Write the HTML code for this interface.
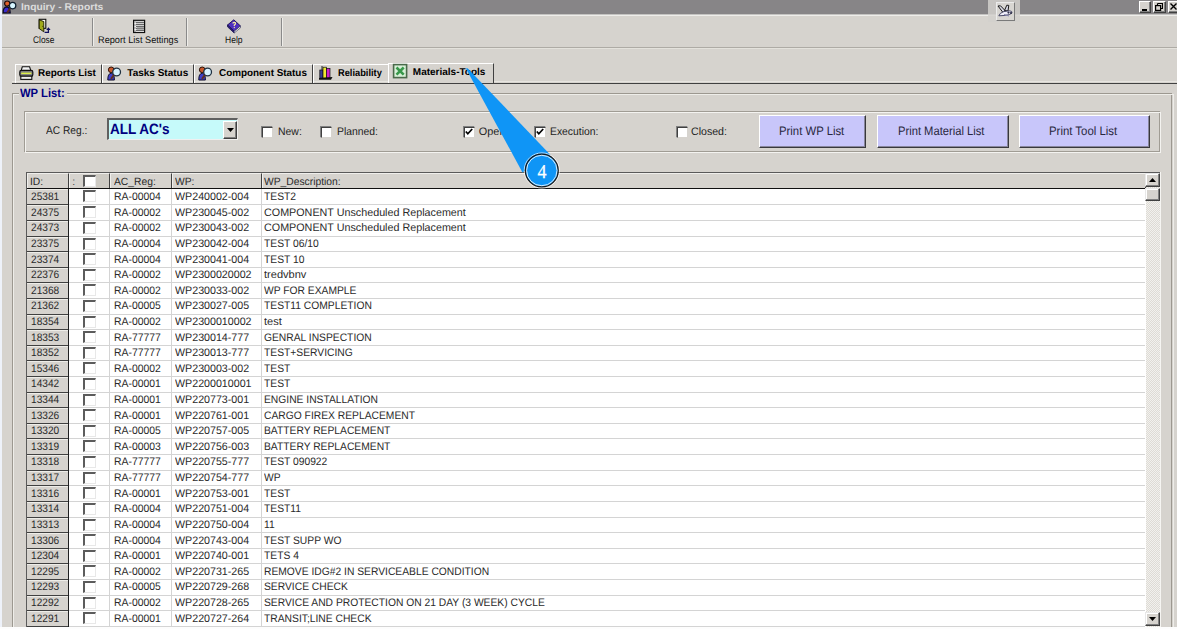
<!DOCTYPE html>
<html><head><meta charset="utf-8"><style>
*{margin:0;padding:0;box-sizing:border-box}
html,body{width:1177px;height:629px;overflow:hidden;background:#d6d3ce;font-family:"Liberation Sans",sans-serif;color:#000}
.a{position:absolute}
.t{position:absolute;white-space:pre;line-height:1;text-rendering:geometricPrecision}
.cb{position:absolute;width:13px;height:12px;border-top:2px solid #5c5c5c;border-left:2px solid #5c5c5c;border-right:1px solid #e8e8e8;border-bottom:1px solid #e8e8e8;background:#fff}
.fcb{position:absolute;width:12px;height:12px;border-top:1px solid #808080;border-left:1px solid #808080;border-right:1px solid #fff;border-bottom:1px solid #fff;background:#fff}
.fcb:after{content:"";position:absolute;left:0;top:0;width:9px;height:9px;border-top:1px solid #404040;border-left:1px solid #404040;border-right:1px solid #d6d3ce;border-bottom:1px solid #d6d3ce}
.btn{position:absolute;background:#c8c6fa;border-top:1px solid #fff;border-left:1px solid #fff;border-right:1px solid #38383c;border-bottom:1px solid #38383c;box-shadow:inset -1px -1px 0 #88869c}
.hd{position:absolute;top:173px;height:15px;background:#d6d3ce;border-top:1px solid #f0efec;border-left:1px solid #f0efec;border-right:1px solid #404040}
.tb{position:absolute;border-top:1px solid #fff;border-left:1px solid #fff;border-right:1px solid #404040;height:19px;top:64px}
</style></head><body>
<div class="a" style="left:0;top:0;width:2px;height:629px;background:#eef2fa"></div>
<div class="a" style="left:2px;top:0;width:1175px;height:14px;background:#878587"></div>
<div class="t" style="left:20.60px;top:3.00px;font-size:9.8px;font-weight:700;color:#dcdcdc;transform:scaleX(1.0506);transform-origin:0 0;">Inquiry - Reports</div>
<svg class="a" style="left:2px;top:0" width="15" height="14" viewBox="0 0 15 14">
<path d="M1.2,12.8 Q0.8,7.2 4.8,6.8 Q8,7 8.2,12.8 Z" fill="#3a2ad0" stroke="#0a0a20" stroke-width="1.2"/>
<circle cx="5.2" cy="3.6" r="2.6" fill="#e0602a" stroke="#1a0a0a" stroke-width="1.2"/>
<circle cx="10.6" cy="5.6" r="3.2" fill="#d8f6ff" stroke="#102030" stroke-width="1.3"/>
<path d="M8,8.4 L5.2,12.4" stroke="#602a1a" stroke-width="1.8"/>
</svg>
<div class="a" style="left:1138.5px;top:1px;width:12.5px;height:11.5px;background:#d6d3ce;border-top:1px solid #fff;border-left:1px solid #fff;border-right:1px solid #404040;border-bottom:1px solid #404040;box-shadow:inset -1px -1px 0 #808080"></div>
<div class="a" style="left:1142px;top:8.5px;width:5px;height:2px;background:#000"></div>
<div class="a" style="left:1152.5px;top:1px;width:13px;height:11.5px;background:#d6d3ce;border-top:1px solid #fff;border-left:1px solid #fff;border-right:1px solid #404040;border-bottom:1px solid #404040;box-shadow:inset -1px -1px 0 #808080"></div>
<svg class="a" style="left:1155px;top:2.5px" width="8" height="8" viewBox="0 0 8 8"><path d="M2.5,0.5 H7.5 V5.5 H6 M2.5,0.5 V2" fill="none" stroke="#000" stroke-width="1.2"/><rect x="0.6" y="2.6" width="5" height="4.8" fill="none" stroke="#000" stroke-width="1.2"/></svg>
<div class="a" style="left:1167.5px;top:1px;width:12px;height:11.5px;background:#d6d3ce;border-top:1px solid #fff;border-left:1px solid #fff;border-right:1px solid #404040;border-bottom:1px solid #404040;box-shadow:inset -1px -1px 0 #808080"></div>
<svg class="a" style="left:1170px;top:3px" width="7" height="7" viewBox="0 0 7 7"><path d="M0.5,0.5 L6.5,6.5 M6.5,0.5 L0.5,6.5" stroke="#000" stroke-width="1.4"/></svg>
<div class="a" style="left:2px;top:14px;width:1175px;height:1px;background:#c4c3c1"></div>
<div class="a" style="left:2px;top:15px;width:1175px;height:1px;background:#eeedea"></div>
<div class="a" style="left:2px;top:46.6px;width:1175px;height:1.8px;background:#aeaba5"></div>
<div class="a" style="left:2px;top:48.2px;width:1175px;height:1px;background:#e4e2dc"></div>
<div class="a" style="left:91.5px;top:17.5px;width:1px;height:28px;background:#8a8a8a"></div>
<div class="a" style="left:92.5px;top:17.5px;width:1px;height:28px;background:#eeede9"></div>
<div class="a" style="left:186.3px;top:17.5px;width:1px;height:28px;background:#8a8a8a"></div>
<div class="a" style="left:187.3px;top:17.5px;width:1px;height:28px;background:#eeede9"></div>
<div class="a" style="left:281px;top:17.5px;width:1px;height:28px;background:#8a8a8a"></div>
<div class="a" style="left:282px;top:17.5px;width:1px;height:28px;background:#eeede9"></div>
<div class="a" style="left:987.6px;top:0;width:32.7px;height:22px;background:#d2d0cc;opacity:0.85"></div>
<div class="a" style="left:995.7px;top:2px;width:19.5px;height:18.5px;background:#d8d6d2;border-top:1px solid #ececec;border-left:1px solid #ececec;border-right:1.5px solid #7a7a7a;border-bottom:1.5px solid #7a7a7a"></div>
<svg class="a" style="left:995px;top:2px" width="20" height="18" viewBox="995 2 20 18">
<path d="M998,6 L1000.5,5.8 L1006,11.5 L1003,12.5 Z" fill="#d8d8e4" stroke="#181818" stroke-width="1"/>
<path d="M1004.5,10.5 L1006.8,5.2 L1008.8,5.4 L1008,11 Z" fill="#d8d8e4" stroke="#181818" stroke-width="1"/>
<path d="M998.8,15.8 Q999.5,13 1004,11.5 L1009.5,10.8 Q1012.5,11 1012,13 Q1010.5,15 1004,15.5 Z" fill="#eeeef8" stroke="#3a3a5a" stroke-width="0.9"/>
<circle cx="1008.5" cy="12.6" r="1.1" fill="#30304a"/><circle cx="1011" cy="13" r="1.1" fill="#30304a"/>
<path d="M1004,14.5 L1009,16" stroke="#8080a8" stroke-width="1"/>
</svg>
<div class="t" style="left:33.20px;top:36.00px;font-size:9.6px;font-weight:400;color:#111;transform:scaleX(0.8720);transform-origin:0 0;">Close</div>
<div class="t" style="left:98.00px;top:36.00px;font-size:9.6px;font-weight:400;color:#111;transform:scaleX(0.9583);transform-origin:0 0;">Report List Settings</div>
<div class="t" style="left:224.60px;top:36.00px;font-size:9.6px;font-weight:400;color:#111;transform:scaleX(0.8900);transform-origin:0 0;">Help</div>
<svg class="a" style="left:0;top:0" width="260" height="40" viewBox="0 0 260 40">
<rect x="39.2" y="19.3" width="6.6" height="9" fill="#fffff4" stroke="#101010" stroke-width="1.1"/>
<path d="M39.2,19.8 L43.8,21.6 L43.8,31.8 L39.2,28.6 Z" fill="#a0aa1c" stroke="#1a1a00" stroke-width="0.9"/>
<circle cx="42.8" cy="26.2" r="0.5" fill="#202000"/>
<path d="M44.6,32.3 H48.4 V29" fill="none" stroke="#101060" stroke-width="1.3"/>
<path d="M46.2,30 L48.4,27.3 L50.6,30 Z" fill="#101060"/>
<rect x="133.6" y="20.3" width="11" height="12.2" fill="#f4f4f4" stroke="#101010" stroke-width="1.2"/>
<path d="M136,22.3 H144 M136,24.3 H144 M136,26.3 H144 M136,28.3 H144 M136,30.3 H144" stroke="#303030" stroke-width="0.9"/>
<rect x="137" y="26.8" width="7" height="3" fill="#909090" opacity="0.6"/>
<path d="M134.5,22 H135.5 M134.5,25 H135.5 M134.5,28 H135.5 M134.5,31 H135.5" stroke="#202020" stroke-width="0.9"/>
<path d="M227.5,25 L233.8,19.8 L240.5,26 L234.2,31.3 Z" fill="#4f30c0" stroke="#1a1050" stroke-width="0.9"/>
<path d="M227.5,25 L227.5,26.8 L234.2,33 L234.2,31.3 Z" fill="#2a1a80" stroke="#1a1050" stroke-width="0.8"/>
<path d="M234.2,31.3 L240.5,26 L240.5,27.8 L234.2,33 Z" fill="#f0f0f8" stroke="#404060" stroke-width="0.7"/>
<path d="M232.6,23.3 Q234,21.6 235.4,22.8 Q236,24.2 234.4,25 L234.2,26.2" fill="none" stroke="#f8f0a0" stroke-width="1.2"/>
<circle cx="234.3" cy="27.6" r="0.7" fill="#f8f0a0"/>
</svg>
<div class="a" style="left:12px;top:81px;width:1165px;height:1px;background:#e6e4df"></div>
<div class="a" style="left:12px;top:82.5px;width:1165px;height:1.2px;background:#404040"></div>
<div class="tb" style="left:14.5px;width:87.5px;"></div>
<div class="t" style="left:38.20px;top:69.00px;font-size:10.0px;font-weight:700;color:#000;transform:scaleX(0.9915);transform-origin:0 0;">Reports List</div>
<div class="tb" style="left:102px;width:92px;"></div>
<div class="t" style="left:127.30px;top:69.00px;font-size:10.0px;font-weight:700;color:#000;">Tasks Status</div>
<div class="tb" style="left:194px;width:119px;"></div>
<div class="t" style="left:219.00px;top:69.00px;font-size:10.0px;font-weight:700;color:#000;transform:scaleX(0.9888);transform-origin:0 0;">Component Status</div>
<div class="tb" style="left:313px;width:74.5px;border-right:none;"></div>
<div class="t" style="left:337.80px;top:69.00px;font-size:10.0px;font-weight:700;color:#000;transform:scaleX(0.9271);transform-origin:0 0;">Reliability</div>
<div class="a" style="left:387.5px;top:62.5px;width:106px;height:20px;background:#d6d3ce;border-top:1px solid #fff;border-left:1px solid #fff;border-right:1px solid #404040"></div>
<div class="t" style="left:412.80px;top:67.50px;font-size:10.0px;font-weight:700;color:#000;">Materials-Tools</div>
<svg class="a" style="left:0;top:0" width="40" height="84" viewBox="0 0 40 84">
<path d="M22.3,66.8 H29.6 L30.8,70.5 H21.2 Z" fill="#f4f4f4" stroke="#101010" stroke-width="1.1"/>
<rect x="19.8" y="70.3" width="13" height="6" rx="1.6" fill="#7c7c80" stroke="#101010" stroke-width="1.2"/>
<rect x="21.2" y="72.6" width="10.2" height="1.5" fill="#dcf048"/>
<rect x="20.8" y="76.2" width="11" height="3.2" fill="#eeeeee" stroke="#101010" stroke-width="1.1"/>
</svg>
<svg class="a" style="left:107px;top:65.5px" width="15" height="15" viewBox="0 0 15 15">
<path d="M0.8,14 Q0.6,7.6 4.2,7.2 Q7.4,7.4 7.4,14 Z" fill="#4040c8" stroke="#101030" stroke-width="1"/>
<circle cx="4.2" cy="3.8" r="2.8" fill="#c8582a" stroke="#2a1008" stroke-width="1"/>
<circle cx="9.6" cy="6" r="3.9" fill="#d8f4ff" stroke="#203040" stroke-width="1.3"/>
<path d="M6.8,9 L4,13" stroke="#603020" stroke-width="1.9"/>
</svg>
<svg class="a" style="left:198px;top:65.5px" width="15" height="15" viewBox="0 0 15 15">
<path d="M0.8,14 Q0.6,7.6 4.2,7.2 Q7.4,7.4 7.4,14 Z" fill="#4040c8" stroke="#101030" stroke-width="1"/>
<circle cx="4.2" cy="3.8" r="2.8" fill="#c8582a" stroke="#2a1008" stroke-width="1"/>
<circle cx="9.6" cy="6" r="3.9" fill="#d8f4ff" stroke="#203040" stroke-width="1.3"/>
<path d="M6.8,9 L4,13" stroke="#603020" stroke-width="1.9"/>
</svg>
<svg class="a" style="left:0;top:0" width="420" height="90" viewBox="0 0 420 90">
<rect x="319.8" y="70" width="3.2" height="8.2" fill="#3a3a90" stroke="#101010" stroke-width="0.7"/>
<rect x="323" y="67.2" width="3.4" height="11" fill="#f0e830" stroke="#101010" stroke-width="0.7"/>
<rect x="326.4" y="68.4" width="3.6" height="9.8" fill="#d020c8" stroke="#101010" stroke-width="0.7"/>
<path d="M322,66 V70" stroke="#101010" stroke-width="0.9"/>
<path d="M319,78 L332.5,77 L331,79.8 L319,79.8 Z" fill="#101010"/>
<rect x="393.6" y="64.6" width="13" height="13" fill="#d8f0d8" stroke="#4a6a4a" stroke-width="1.6"/>
<path d="M396.5,67.5 L403.7,74.7 M403.7,67.5 L396.5,74.7" stroke="#38984a" stroke-width="2.6"/>
</svg>
<div class="a" style="left:12px;top:93px;width:1160px;height:600px;border-top:1px solid #9c9890;border-left:1px solid #9c9890;border-right:1px solid #9c9890"></div>
<div class="a" style="left:13px;top:94px;width:1160.5px;height:600px;border-top:1px solid #eeede9;border-left:1px solid #eeede9;border-right:1px solid #eeede9"></div>
<div class="a" style="left:19px;top:86px;width:48px;height:12px;background:#d6d3ce"></div>
<div class="t" style="left:20.20px;top:87.00px;font-size:12.0px;font-weight:700;color:#000080;transform:scaleX(0.9362);transform-origin:0 0;">WP List:</div>
<div class="a" style="left:24px;top:111px;width:1136px;height:41px;border:1px solid #a09c94"></div>
<div class="a" style="left:25px;top:112px;width:1136px;height:41px;border:1px solid #f4f3f0"></div>
<div class="t" style="left:46.30px;top:126.00px;font-size:11.2px;font-weight:400;color:#222;transform:scaleX(0.9111);transform-origin:0 0;">AC Reg.:</div>
<div class="a" style="left:107px;top:118px;width:130.5px;height:22px;background:#c6fafa;border-top:2px solid #606060;border-left:2px solid #606060;border-right:1px solid #f0f0f0;border-bottom:1px solid #f0f0f0"></div>
<div class="t" style="left:110.20px;top:122.00px;font-size:15.0px;font-weight:700;color:#000080;transform:scaleX(0.9015);transform-origin:0 0;">ALL AC's</div>
<div class="a" style="left:223px;top:120.5px;width:13.5px;height:18.5px;background:#d6d3ce;border-top:1px solid #fff;border-left:1px solid #fff;border-right:1px solid #404040;border-bottom:1px solid #404040;box-shadow:inset -1px -1px 0 #808080"></div>
<svg class="a" style="left:226.5px;top:127.5px" width="7" height="4" viewBox="0 0 7 4"><path d="M0,0 H7 L3.5,4 Z" fill="#000"/></svg>
<div class="fcb" style="left:261.3px;top:126.3px"></div>
<div class="t" style="left:277.60px;top:127.00px;font-size:10.9px;font-weight:400;color:#222;transform:scaleX(0.9583);transform-origin:0 0;">New:</div>
<div class="fcb" style="left:320.4px;top:126.3px"></div>
<div class="t" style="left:336.80px;top:127.00px;font-size:10.9px;font-weight:400;color:#222;transform:scaleX(0.9535);transform-origin:0 0;">Planned:</div>
<div class="fcb" style="left:462.8px;top:126.3px"></div>
<svg class="a" style="left:464.8px;top:128.3px" width="8" height="8" viewBox="0 0 8 8"><path d="M0.8,3.5 L2.8,5.8 L7.2,1" fill="none" stroke="#000" stroke-width="1.7"/></svg>
<div class="t" style="left:478.80px;top:127.00px;font-size:10.9px;font-weight:400;color:#222;">Open:</div>
<div class="fcb" style="left:534px;top:126.3px"></div>
<svg class="a" style="left:536px;top:128.3px" width="8" height="8" viewBox="0 0 8 8"><path d="M0.8,3.5 L2.8,5.8 L7.2,1" fill="none" stroke="#000" stroke-width="1.7"/></svg>
<div class="t" style="left:549.70px;top:127.00px;font-size:10.9px;font-weight:400;color:#222;transform:scaleX(0.9500);transform-origin:0 0;">Execution:</div>
<div class="fcb" style="left:675.8px;top:126.3px"></div>
<div class="t" style="left:691.20px;top:127.00px;font-size:10.9px;font-weight:400;color:#222;transform:scaleX(0.9730);transform-origin:0 0;">Closed:</div>
<div class="btn" style="left:759px;top:114.5px;width:107px;height:33px"></div>
<div class="btn" style="left:877px;top:114.5px;width:131.5px;height:33px"></div>
<div class="btn" style="left:1019px;top:114.5px;width:131px;height:33px"></div>
<div class="t" style="left:779.00px;top:125.00px;font-size:12.2px;font-weight:400;color:#282840;transform:scaleX(0.9296);transform-origin:0 0;">Print WP List</div>
<div class="t" style="left:898.40px;top:125.00px;font-size:12.2px;font-weight:400;color:#282840;transform:scaleX(0.9179);transform-origin:0 0;">Print Material List</div>
<div class="t" style="left:1049.40px;top:125.00px;font-size:12.2px;font-weight:400;color:#282840;transform:scaleX(0.9342);transform-origin:0 0;">Print Tool List</div>
<div class="a" style="left:26px;top:172px;width:1134px;height:470px;background:#fff;border:1px solid #5a5a5a;border-bottom:none"></div>
<div class="a" style="left:27px;top:173px;width:1118px;height:15.5px;background:#d6d3ce"></div>
<div class="hd" style="left:27px;width:42px"></div>
<div class="t" style="left:30.30px;top:177.00px;font-size:10.5px;font-weight:400;color:#2a2a2a;transform:scaleX(0.9800);transform-origin:0 0;">ID:</div>
<div class="hd" style="left:69px;width:41px"></div>
<div class="hd" style="left:110px;width:62px"></div>
<div class="t" style="left:114.20px;top:177.00px;font-size:10.5px;font-weight:400;color:#2a2a2a;transform:scaleX(0.9800);transform-origin:0 0;">AC_Reg:</div>
<div class="hd" style="left:172px;width:90px"></div>
<div class="t" style="left:175.20px;top:177.00px;font-size:10.5px;font-weight:400;color:#2a2a2a;transform:scaleX(0.9800);transform-origin:0 0;">WP:</div>
<div class="hd" style="left:262px;width:884px"></div>
<div class="t" style="left:264.40px;top:177.00px;font-size:10.5px;font-weight:400;color:#2a2a2a;transform:scaleX(0.9800);transform-origin:0 0;">WP_Description:</div>
<div class="t" style="left:72.30px;top:177.00px;font-size:10.5px;font-weight:400;color:#444;">:</div>
<div class="cb" style="left:83px;top:174.8px"></div>
<div class="a" style="left:96px;top:174px;width:13px;height:14px;background:#cdcac3"></div>
<div class="a" style="left:27px;top:188px;width:1118px;height:1.2px;background:#101010"></div>
<div class="a" style="left:27px;top:189px;width:41.3px;height:440px;background:#d6d3ce"></div>
<div class="a" style="left:68px;top:189px;width:1px;height:450px;background:#202020"></div>
<div class="a" style="left:109px;top:189px;width:1px;height:450px;background:#d4d4d4"></div>
<div class="a" style="left:171px;top:189px;width:1px;height:450px;background:#d4d4d4"></div>
<div class="a" style="left:261px;top:189px;width:1px;height:450px;background:#d4d4d4"></div>
<div class="a" style="left:27px;top:189.40px;width:41.3px;height:1px;background:#eeede8"></div>
<div class="a" style="left:27px;top:204.30px;width:41.3px;height:1px;background:#404040"></div>
<div class="a" style="left:69.3px;top:204.30px;width:1075.7px;height:1px;background:#d4d4d4"></div>
<div class="t" style="left:30.80px;top:192.00px;font-size:10.9px;font-weight:400;color:#2a2a2a;transform:scaleX(0.9300);transform-origin:0 0;">25381</div>
<div class="cb" style="left:83px;top:190.40px"></div>
<div class="t" style="left:114.00px;top:192.00px;font-size:10.9px;font-weight:400;color:#2a2a2a;transform:scaleX(0.9550);transform-origin:0 0;">RA-00004</div>
<div class="t" style="left:174.50px;top:192.00px;font-size:10.9px;font-weight:400;color:#2a2a2a;transform:scaleX(0.9800);transform-origin:0 0;">WP240002-004</div>
<div class="t" style="left:264.40px;top:192.00px;font-size:10.9px;font-weight:400;color:#2a2a2a;transform:scaleX(0.9450);transform-origin:0 0;">TEST2</div>
<div class="a" style="left:27px;top:205.30px;width:41.3px;height:1px;background:#eeede8"></div>
<div class="a" style="left:27px;top:219.91px;width:41.3px;height:1px;background:#404040"></div>
<div class="a" style="left:69.3px;top:219.91px;width:1075.7px;height:1px;background:#d4d4d4"></div>
<div class="t" style="left:30.80px;top:208.00px;font-size:10.9px;font-weight:400;color:#2a2a2a;transform:scaleX(0.9300);transform-origin:0 0;">24375</div>
<div class="cb" style="left:83px;top:206.30px"></div>
<div class="t" style="left:114.00px;top:208.00px;font-size:10.9px;font-weight:400;color:#2a2a2a;transform:scaleX(0.9550);transform-origin:0 0;">RA-00002</div>
<div class="t" style="left:174.50px;top:208.00px;font-size:10.9px;font-weight:400;color:#2a2a2a;transform:scaleX(0.9800);transform-origin:0 0;">WP230045-002</div>
<div class="t" style="left:264.40px;top:208.00px;font-size:10.9px;font-weight:400;color:#2a2a2a;transform:scaleX(0.9874);transform-origin:0 0;">COMPONENT Unscheduled Replacement</div>
<div class="a" style="left:27px;top:220.91px;width:41.3px;height:1px;background:#eeede8"></div>
<div class="a" style="left:27px;top:235.52px;width:41.3px;height:1px;background:#404040"></div>
<div class="a" style="left:69.3px;top:235.52px;width:1075.7px;height:1px;background:#d4d4d4"></div>
<div class="t" style="left:30.80px;top:223.00px;font-size:10.9px;font-weight:400;color:#2a2a2a;transform:scaleX(0.9300);transform-origin:0 0;">24373</div>
<div class="cb" style="left:83px;top:221.91px"></div>
<div class="t" style="left:114.00px;top:223.00px;font-size:10.9px;font-weight:400;color:#2a2a2a;transform:scaleX(0.9550);transform-origin:0 0;">RA-00002</div>
<div class="t" style="left:174.50px;top:223.00px;font-size:10.9px;font-weight:400;color:#2a2a2a;transform:scaleX(0.9800);transform-origin:0 0;">WP230043-002</div>
<div class="t" style="left:264.40px;top:223.00px;font-size:10.9px;font-weight:400;color:#2a2a2a;transform:scaleX(0.9874);transform-origin:0 0;">COMPONENT Unscheduled Replacement</div>
<div class="a" style="left:27px;top:236.52px;width:41.3px;height:1px;background:#eeede8"></div>
<div class="a" style="left:27px;top:251.13px;width:41.3px;height:1px;background:#404040"></div>
<div class="a" style="left:69.3px;top:251.13px;width:1075.7px;height:1px;background:#d4d4d4"></div>
<div class="t" style="left:30.80px;top:239.00px;font-size:10.9px;font-weight:400;color:#2a2a2a;transform:scaleX(0.9300);transform-origin:0 0;">23375</div>
<div class="cb" style="left:83px;top:237.52px"></div>
<div class="t" style="left:114.00px;top:239.00px;font-size:10.9px;font-weight:400;color:#2a2a2a;transform:scaleX(0.9550);transform-origin:0 0;">RA-00004</div>
<div class="t" style="left:174.50px;top:239.00px;font-size:10.9px;font-weight:400;color:#2a2a2a;transform:scaleX(0.9800);transform-origin:0 0;">WP230042-004</div>
<div class="t" style="left:264.40px;top:239.00px;font-size:10.9px;font-weight:400;color:#2a2a2a;transform:scaleX(0.9450);transform-origin:0 0;">TEST 06/10</div>
<div class="a" style="left:27px;top:252.13px;width:41.3px;height:1px;background:#eeede8"></div>
<div class="a" style="left:27px;top:266.74px;width:41.3px;height:1px;background:#404040"></div>
<div class="a" style="left:69.3px;top:266.74px;width:1075.7px;height:1px;background:#d4d4d4"></div>
<div class="t" style="left:30.80px;top:255.00px;font-size:10.9px;font-weight:400;color:#2a2a2a;transform:scaleX(0.9300);transform-origin:0 0;">23374</div>
<div class="cb" style="left:83px;top:253.13px"></div>
<div class="t" style="left:114.00px;top:255.00px;font-size:10.9px;font-weight:400;color:#2a2a2a;transform:scaleX(0.9550);transform-origin:0 0;">RA-00004</div>
<div class="t" style="left:174.50px;top:255.00px;font-size:10.9px;font-weight:400;color:#2a2a2a;transform:scaleX(0.9800);transform-origin:0 0;">WP230041-004</div>
<div class="t" style="left:264.40px;top:255.00px;font-size:10.9px;font-weight:400;color:#2a2a2a;transform:scaleX(0.9450);transform-origin:0 0;">TEST 10</div>
<div class="a" style="left:27px;top:267.74px;width:41.3px;height:1px;background:#eeede8"></div>
<div class="a" style="left:27px;top:282.35px;width:41.3px;height:1px;background:#404040"></div>
<div class="a" style="left:69.3px;top:282.35px;width:1075.7px;height:1px;background:#d4d4d4"></div>
<div class="t" style="left:30.80px;top:270.00px;font-size:10.9px;font-weight:400;color:#2a2a2a;transform:scaleX(0.9300);transform-origin:0 0;">22376</div>
<div class="cb" style="left:83px;top:268.74px"></div>
<div class="t" style="left:114.00px;top:270.00px;font-size:10.9px;font-weight:400;color:#2a2a2a;transform:scaleX(0.9550);transform-origin:0 0;">RA-00002</div>
<div class="t" style="left:174.50px;top:270.00px;font-size:10.9px;font-weight:400;color:#2a2a2a;transform:scaleX(0.9800);transform-origin:0 0;">WP2300020002</div>
<div class="t" style="left:264.40px;top:270.00px;font-size:10.9px;font-weight:400;color:#2a2a2a;transform:scaleX(1.0150);transform-origin:0 0;">tredvbnv</div>
<div class="a" style="left:27px;top:283.35px;width:41.3px;height:1px;background:#eeede8"></div>
<div class="a" style="left:27px;top:297.96px;width:41.3px;height:1px;background:#404040"></div>
<div class="a" style="left:69.3px;top:297.96px;width:1075.7px;height:1px;background:#d4d4d4"></div>
<div class="t" style="left:30.80px;top:286.00px;font-size:10.9px;font-weight:400;color:#2a2a2a;transform:scaleX(0.9300);transform-origin:0 0;">21368</div>
<div class="cb" style="left:83px;top:284.35px"></div>
<div class="t" style="left:114.00px;top:286.00px;font-size:10.9px;font-weight:400;color:#2a2a2a;transform:scaleX(0.9550);transform-origin:0 0;">RA-00002</div>
<div class="t" style="left:174.50px;top:286.00px;font-size:10.9px;font-weight:400;color:#2a2a2a;transform:scaleX(0.9800);transform-origin:0 0;">WP230033-002</div>
<div class="t" style="left:264.40px;top:286.00px;font-size:10.9px;font-weight:400;color:#2a2a2a;transform:scaleX(0.9450);transform-origin:0 0;">WP FOR EXAMPLE</div>
<div class="a" style="left:27px;top:298.96px;width:41.3px;height:1px;background:#eeede8"></div>
<div class="a" style="left:27px;top:313.57px;width:41.3px;height:1px;background:#404040"></div>
<div class="a" style="left:69.3px;top:313.57px;width:1075.7px;height:1px;background:#d4d4d4"></div>
<div class="t" style="left:30.80px;top:301.00px;font-size:10.9px;font-weight:400;color:#2a2a2a;transform:scaleX(0.9300);transform-origin:0 0;">21362</div>
<div class="cb" style="left:83px;top:299.96px"></div>
<div class="t" style="left:114.00px;top:301.00px;font-size:10.9px;font-weight:400;color:#2a2a2a;transform:scaleX(0.9550);transform-origin:0 0;">RA-00005</div>
<div class="t" style="left:174.50px;top:301.00px;font-size:10.9px;font-weight:400;color:#2a2a2a;transform:scaleX(0.9800);transform-origin:0 0;">WP230027-005</div>
<div class="t" style="left:264.40px;top:301.00px;font-size:10.9px;font-weight:400;color:#2a2a2a;transform:scaleX(0.9450);transform-origin:0 0;">TEST11 COMPLETION</div>
<div class="a" style="left:27px;top:314.57px;width:41.3px;height:1px;background:#eeede8"></div>
<div class="a" style="left:27px;top:329.18px;width:41.3px;height:1px;background:#404040"></div>
<div class="a" style="left:69.3px;top:329.18px;width:1075.7px;height:1px;background:#d4d4d4"></div>
<div class="t" style="left:30.80px;top:317.00px;font-size:10.9px;font-weight:400;color:#2a2a2a;transform:scaleX(0.9300);transform-origin:0 0;">18354</div>
<div class="cb" style="left:83px;top:315.57px"></div>
<div class="t" style="left:114.00px;top:317.00px;font-size:10.9px;font-weight:400;color:#2a2a2a;transform:scaleX(0.9550);transform-origin:0 0;">RA-00002</div>
<div class="t" style="left:174.50px;top:317.00px;font-size:10.9px;font-weight:400;color:#2a2a2a;transform:scaleX(0.9800);transform-origin:0 0;">WP2300010002</div>
<div class="t" style="left:264.40px;top:317.00px;font-size:10.9px;font-weight:400;color:#2a2a2a;transform:scaleX(1.0150);transform-origin:0 0;">test</div>
<div class="a" style="left:27px;top:330.18px;width:41.3px;height:1px;background:#eeede8"></div>
<div class="a" style="left:27px;top:344.79px;width:41.3px;height:1px;background:#404040"></div>
<div class="a" style="left:69.3px;top:344.79px;width:1075.7px;height:1px;background:#d4d4d4"></div>
<div class="t" style="left:30.80px;top:333.00px;font-size:10.9px;font-weight:400;color:#2a2a2a;transform:scaleX(0.9300);transform-origin:0 0;">18353</div>
<div class="cb" style="left:83px;top:331.18px"></div>
<div class="t" style="left:114.00px;top:333.00px;font-size:10.9px;font-weight:400;color:#2a2a2a;transform:scaleX(0.9550);transform-origin:0 0;">RA-77777</div>
<div class="t" style="left:174.50px;top:333.00px;font-size:10.9px;font-weight:400;color:#2a2a2a;transform:scaleX(0.9800);transform-origin:0 0;">WP230014-777</div>
<div class="t" style="left:264.40px;top:333.00px;font-size:10.9px;font-weight:400;color:#2a2a2a;transform:scaleX(0.9450);transform-origin:0 0;">GENRAL INSPECTION</div>
<div class="a" style="left:27px;top:345.79px;width:41.3px;height:1px;background:#eeede8"></div>
<div class="a" style="left:27px;top:360.40px;width:41.3px;height:1px;background:#404040"></div>
<div class="a" style="left:69.3px;top:360.40px;width:1075.7px;height:1px;background:#d4d4d4"></div>
<div class="t" style="left:30.80px;top:348.00px;font-size:10.9px;font-weight:400;color:#2a2a2a;transform:scaleX(0.9300);transform-origin:0 0;">18352</div>
<div class="cb" style="left:83px;top:346.79px"></div>
<div class="t" style="left:114.00px;top:348.00px;font-size:10.9px;font-weight:400;color:#2a2a2a;transform:scaleX(0.9550);transform-origin:0 0;">RA-77777</div>
<div class="t" style="left:174.50px;top:348.00px;font-size:10.9px;font-weight:400;color:#2a2a2a;transform:scaleX(0.9800);transform-origin:0 0;">WP230013-777</div>
<div class="t" style="left:264.40px;top:348.00px;font-size:10.9px;font-weight:400;color:#2a2a2a;transform:scaleX(0.9450);transform-origin:0 0;">TEST+SERVICING</div>
<div class="a" style="left:27px;top:361.40px;width:41.3px;height:1px;background:#eeede8"></div>
<div class="a" style="left:27px;top:376.01px;width:41.3px;height:1px;background:#404040"></div>
<div class="a" style="left:69.3px;top:376.01px;width:1075.7px;height:1px;background:#d4d4d4"></div>
<div class="t" style="left:30.80px;top:364.00px;font-size:10.9px;font-weight:400;color:#2a2a2a;transform:scaleX(0.9300);transform-origin:0 0;">15346</div>
<div class="cb" style="left:83px;top:362.40px"></div>
<div class="t" style="left:114.00px;top:364.00px;font-size:10.9px;font-weight:400;color:#2a2a2a;transform:scaleX(0.9550);transform-origin:0 0;">RA-00002</div>
<div class="t" style="left:174.50px;top:364.00px;font-size:10.9px;font-weight:400;color:#2a2a2a;transform:scaleX(0.9800);transform-origin:0 0;">WP230003-002</div>
<div class="t" style="left:264.40px;top:364.00px;font-size:10.9px;font-weight:400;color:#2a2a2a;transform:scaleX(0.9450);transform-origin:0 0;">TEST</div>
<div class="a" style="left:27px;top:377.01px;width:41.3px;height:1px;background:#eeede8"></div>
<div class="a" style="left:27px;top:391.62px;width:41.3px;height:1px;background:#404040"></div>
<div class="a" style="left:69.3px;top:391.62px;width:1075.7px;height:1px;background:#d4d4d4"></div>
<div class="t" style="left:30.80px;top:379.00px;font-size:10.9px;font-weight:400;color:#2a2a2a;transform:scaleX(0.9300);transform-origin:0 0;">14342</div>
<div class="cb" style="left:83px;top:378.01px"></div>
<div class="t" style="left:114.00px;top:379.00px;font-size:10.9px;font-weight:400;color:#2a2a2a;transform:scaleX(0.9550);transform-origin:0 0;">RA-00001</div>
<div class="t" style="left:174.50px;top:379.00px;font-size:10.9px;font-weight:400;color:#2a2a2a;transform:scaleX(0.9800);transform-origin:0 0;">WP2200010001</div>
<div class="t" style="left:264.40px;top:379.00px;font-size:10.9px;font-weight:400;color:#2a2a2a;transform:scaleX(0.9450);transform-origin:0 0;">TEST</div>
<div class="a" style="left:27px;top:392.62px;width:41.3px;height:1px;background:#eeede8"></div>
<div class="a" style="left:27px;top:407.23px;width:41.3px;height:1px;background:#404040"></div>
<div class="a" style="left:69.3px;top:407.23px;width:1075.7px;height:1px;background:#d4d4d4"></div>
<div class="t" style="left:30.80px;top:395.00px;font-size:10.9px;font-weight:400;color:#2a2a2a;transform:scaleX(0.9300);transform-origin:0 0;">13344</div>
<div class="cb" style="left:83px;top:393.62px"></div>
<div class="t" style="left:114.00px;top:395.00px;font-size:10.9px;font-weight:400;color:#2a2a2a;transform:scaleX(0.9550);transform-origin:0 0;">RA-00001</div>
<div class="t" style="left:174.50px;top:395.00px;font-size:10.9px;font-weight:400;color:#2a2a2a;transform:scaleX(0.9800);transform-origin:0 0;">WP220773-001</div>
<div class="t" style="left:264.40px;top:395.00px;font-size:10.9px;font-weight:400;color:#2a2a2a;transform:scaleX(0.9450);transform-origin:0 0;">ENGINE INSTALLATION</div>
<div class="a" style="left:27px;top:408.23px;width:41.3px;height:1px;background:#eeede8"></div>
<div class="a" style="left:27px;top:422.84px;width:41.3px;height:1px;background:#404040"></div>
<div class="a" style="left:69.3px;top:422.84px;width:1075.7px;height:1px;background:#d4d4d4"></div>
<div class="t" style="left:30.80px;top:411.00px;font-size:10.9px;font-weight:400;color:#2a2a2a;transform:scaleX(0.9300);transform-origin:0 0;">13326</div>
<div class="cb" style="left:83px;top:409.23px"></div>
<div class="t" style="left:114.00px;top:411.00px;font-size:10.9px;font-weight:400;color:#2a2a2a;transform:scaleX(0.9550);transform-origin:0 0;">RA-00001</div>
<div class="t" style="left:174.50px;top:411.00px;font-size:10.9px;font-weight:400;color:#2a2a2a;transform:scaleX(0.9800);transform-origin:0 0;">WP220761-001</div>
<div class="t" style="left:264.40px;top:411.00px;font-size:10.9px;font-weight:400;color:#2a2a2a;transform:scaleX(0.9450);transform-origin:0 0;">CARGO FIREX REPLACEMENT</div>
<div class="a" style="left:27px;top:423.84px;width:41.3px;height:1px;background:#eeede8"></div>
<div class="a" style="left:27px;top:438.45px;width:41.3px;height:1px;background:#404040"></div>
<div class="a" style="left:69.3px;top:438.45px;width:1075.7px;height:1px;background:#d4d4d4"></div>
<div class="t" style="left:30.80px;top:426.00px;font-size:10.9px;font-weight:400;color:#2a2a2a;transform:scaleX(0.9300);transform-origin:0 0;">13320</div>
<div class="cb" style="left:83px;top:424.84px"></div>
<div class="t" style="left:114.00px;top:426.00px;font-size:10.9px;font-weight:400;color:#2a2a2a;transform:scaleX(0.9550);transform-origin:0 0;">RA-00005</div>
<div class="t" style="left:174.50px;top:426.00px;font-size:10.9px;font-weight:400;color:#2a2a2a;transform:scaleX(0.9800);transform-origin:0 0;">WP220757-005</div>
<div class="t" style="left:264.40px;top:426.00px;font-size:10.9px;font-weight:400;color:#2a2a2a;transform:scaleX(0.9450);transform-origin:0 0;">BATTERY REPLACEMENT</div>
<div class="a" style="left:27px;top:439.45px;width:41.3px;height:1px;background:#eeede8"></div>
<div class="a" style="left:27px;top:454.06px;width:41.3px;height:1px;background:#404040"></div>
<div class="a" style="left:69.3px;top:454.06px;width:1075.7px;height:1px;background:#d4d4d4"></div>
<div class="t" style="left:30.80px;top:442.00px;font-size:10.9px;font-weight:400;color:#2a2a2a;transform:scaleX(0.9300);transform-origin:0 0;">13319</div>
<div class="cb" style="left:83px;top:440.45px"></div>
<div class="t" style="left:114.00px;top:442.00px;font-size:10.9px;font-weight:400;color:#2a2a2a;transform:scaleX(0.9550);transform-origin:0 0;">RA-00003</div>
<div class="t" style="left:174.50px;top:442.00px;font-size:10.9px;font-weight:400;color:#2a2a2a;transform:scaleX(0.9800);transform-origin:0 0;">WP220756-003</div>
<div class="t" style="left:264.40px;top:442.00px;font-size:10.9px;font-weight:400;color:#2a2a2a;transform:scaleX(0.9450);transform-origin:0 0;">BATTERY REPLACEMENT</div>
<div class="a" style="left:27px;top:455.06px;width:41.3px;height:1px;background:#eeede8"></div>
<div class="a" style="left:27px;top:469.67px;width:41.3px;height:1px;background:#404040"></div>
<div class="a" style="left:69.3px;top:469.67px;width:1075.7px;height:1px;background:#d4d4d4"></div>
<div class="t" style="left:30.80px;top:457.00px;font-size:10.9px;font-weight:400;color:#2a2a2a;transform:scaleX(0.9300);transform-origin:0 0;">13318</div>
<div class="cb" style="left:83px;top:456.06px"></div>
<div class="t" style="left:114.00px;top:457.00px;font-size:10.9px;font-weight:400;color:#2a2a2a;transform:scaleX(0.9550);transform-origin:0 0;">RA-77777</div>
<div class="t" style="left:174.50px;top:457.00px;font-size:10.9px;font-weight:400;color:#2a2a2a;transform:scaleX(0.9800);transform-origin:0 0;">WP220755-777</div>
<div class="t" style="left:264.40px;top:457.00px;font-size:10.9px;font-weight:400;color:#2a2a2a;transform:scaleX(0.9450);transform-origin:0 0;">TEST 090922</div>
<div class="a" style="left:27px;top:470.67px;width:41.3px;height:1px;background:#eeede8"></div>
<div class="a" style="left:27px;top:485.28px;width:41.3px;height:1px;background:#404040"></div>
<div class="a" style="left:69.3px;top:485.28px;width:1075.7px;height:1px;background:#d4d4d4"></div>
<div class="t" style="left:30.80px;top:473.00px;font-size:10.9px;font-weight:400;color:#2a2a2a;transform:scaleX(0.9300);transform-origin:0 0;">13317</div>
<div class="cb" style="left:83px;top:471.67px"></div>
<div class="t" style="left:114.00px;top:473.00px;font-size:10.9px;font-weight:400;color:#2a2a2a;transform:scaleX(0.9550);transform-origin:0 0;">RA-77777</div>
<div class="t" style="left:174.50px;top:473.00px;font-size:10.9px;font-weight:400;color:#2a2a2a;transform:scaleX(0.9800);transform-origin:0 0;">WP220754-777</div>
<div class="t" style="left:264.40px;top:473.00px;font-size:10.9px;font-weight:400;color:#2a2a2a;transform:scaleX(0.9450);transform-origin:0 0;">WP</div>
<div class="a" style="left:27px;top:486.28px;width:41.3px;height:1px;background:#eeede8"></div>
<div class="a" style="left:27px;top:500.89px;width:41.3px;height:1px;background:#404040"></div>
<div class="a" style="left:69.3px;top:500.89px;width:1075.7px;height:1px;background:#d4d4d4"></div>
<div class="t" style="left:30.80px;top:489.00px;font-size:10.9px;font-weight:400;color:#2a2a2a;transform:scaleX(0.9300);transform-origin:0 0;">13316</div>
<div class="cb" style="left:83px;top:487.28px"></div>
<div class="t" style="left:114.00px;top:489.00px;font-size:10.9px;font-weight:400;color:#2a2a2a;transform:scaleX(0.9550);transform-origin:0 0;">RA-00001</div>
<div class="t" style="left:174.50px;top:489.00px;font-size:10.9px;font-weight:400;color:#2a2a2a;transform:scaleX(0.9800);transform-origin:0 0;">WP220753-001</div>
<div class="t" style="left:264.40px;top:489.00px;font-size:10.9px;font-weight:400;color:#2a2a2a;transform:scaleX(0.9450);transform-origin:0 0;">TEST</div>
<div class="a" style="left:27px;top:501.89px;width:41.3px;height:1px;background:#eeede8"></div>
<div class="a" style="left:27px;top:516.50px;width:41.3px;height:1px;background:#404040"></div>
<div class="a" style="left:69.3px;top:516.50px;width:1075.7px;height:1px;background:#d4d4d4"></div>
<div class="t" style="left:30.80px;top:504.00px;font-size:10.9px;font-weight:400;color:#2a2a2a;transform:scaleX(0.9300);transform-origin:0 0;">13314</div>
<div class="cb" style="left:83px;top:502.89px"></div>
<div class="t" style="left:114.00px;top:504.00px;font-size:10.9px;font-weight:400;color:#2a2a2a;transform:scaleX(0.9550);transform-origin:0 0;">RA-00004</div>
<div class="t" style="left:174.50px;top:504.00px;font-size:10.9px;font-weight:400;color:#2a2a2a;transform:scaleX(0.9800);transform-origin:0 0;">WP220751-004</div>
<div class="t" style="left:264.40px;top:504.00px;font-size:10.9px;font-weight:400;color:#2a2a2a;transform:scaleX(0.9450);transform-origin:0 0;">TEST11</div>
<div class="a" style="left:27px;top:517.50px;width:41.3px;height:1px;background:#eeede8"></div>
<div class="a" style="left:27px;top:532.11px;width:41.3px;height:1px;background:#404040"></div>
<div class="a" style="left:69.3px;top:532.11px;width:1075.7px;height:1px;background:#d4d4d4"></div>
<div class="t" style="left:30.80px;top:520.00px;font-size:10.9px;font-weight:400;color:#2a2a2a;transform:scaleX(0.9300);transform-origin:0 0;">13313</div>
<div class="cb" style="left:83px;top:518.50px"></div>
<div class="t" style="left:114.00px;top:520.00px;font-size:10.9px;font-weight:400;color:#2a2a2a;transform:scaleX(0.9550);transform-origin:0 0;">RA-00004</div>
<div class="t" style="left:174.50px;top:520.00px;font-size:10.9px;font-weight:400;color:#2a2a2a;transform:scaleX(0.9800);transform-origin:0 0;">WP220750-004</div>
<div class="t" style="left:264.40px;top:520.00px;font-size:10.9px;font-weight:400;color:#2a2a2a;transform:scaleX(0.9450);transform-origin:0 0;">11</div>
<div class="a" style="left:27px;top:533.11px;width:41.3px;height:1px;background:#eeede8"></div>
<div class="a" style="left:27px;top:547.72px;width:41.3px;height:1px;background:#404040"></div>
<div class="a" style="left:69.3px;top:547.72px;width:1075.7px;height:1px;background:#d4d4d4"></div>
<div class="t" style="left:30.80px;top:536.00px;font-size:10.9px;font-weight:400;color:#2a2a2a;transform:scaleX(0.9300);transform-origin:0 0;">13306</div>
<div class="cb" style="left:83px;top:534.11px"></div>
<div class="t" style="left:114.00px;top:536.00px;font-size:10.9px;font-weight:400;color:#2a2a2a;transform:scaleX(0.9550);transform-origin:0 0;">RA-00004</div>
<div class="t" style="left:174.50px;top:536.00px;font-size:10.9px;font-weight:400;color:#2a2a2a;transform:scaleX(0.9800);transform-origin:0 0;">WP220743-004</div>
<div class="t" style="left:264.40px;top:536.00px;font-size:10.9px;font-weight:400;color:#2a2a2a;transform:scaleX(0.9450);transform-origin:0 0;">TEST SUPP WO</div>
<div class="a" style="left:27px;top:548.72px;width:41.3px;height:1px;background:#eeede8"></div>
<div class="a" style="left:27px;top:563.33px;width:41.3px;height:1px;background:#404040"></div>
<div class="a" style="left:69.3px;top:563.33px;width:1075.7px;height:1px;background:#d4d4d4"></div>
<div class="t" style="left:30.80px;top:551.00px;font-size:10.9px;font-weight:400;color:#2a2a2a;transform:scaleX(0.9300);transform-origin:0 0;">12304</div>
<div class="cb" style="left:83px;top:549.72px"></div>
<div class="t" style="left:114.00px;top:551.00px;font-size:10.9px;font-weight:400;color:#2a2a2a;transform:scaleX(0.9550);transform-origin:0 0;">RA-00001</div>
<div class="t" style="left:174.50px;top:551.00px;font-size:10.9px;font-weight:400;color:#2a2a2a;transform:scaleX(0.9800);transform-origin:0 0;">WP220740-001</div>
<div class="t" style="left:264.40px;top:551.00px;font-size:10.9px;font-weight:400;color:#2a2a2a;transform:scaleX(0.9450);transform-origin:0 0;">TETS 4</div>
<div class="a" style="left:27px;top:564.33px;width:41.3px;height:1px;background:#eeede8"></div>
<div class="a" style="left:27px;top:578.94px;width:41.3px;height:1px;background:#404040"></div>
<div class="a" style="left:69.3px;top:578.94px;width:1075.7px;height:1px;background:#d4d4d4"></div>
<div class="t" style="left:30.80px;top:567.00px;font-size:10.9px;font-weight:400;color:#2a2a2a;transform:scaleX(0.9300);transform-origin:0 0;">12295</div>
<div class="cb" style="left:83px;top:565.33px"></div>
<div class="t" style="left:114.00px;top:567.00px;font-size:10.9px;font-weight:400;color:#2a2a2a;transform:scaleX(0.9550);transform-origin:0 0;">RA-00002</div>
<div class="t" style="left:174.50px;top:567.00px;font-size:10.9px;font-weight:400;color:#2a2a2a;transform:scaleX(0.9800);transform-origin:0 0;">WP220731-265</div>
<div class="t" style="left:264.40px;top:567.00px;font-size:10.9px;font-weight:400;color:#2a2a2a;transform:scaleX(0.9450);transform-origin:0 0;">REMOVE IDG#2 IN SERVICEABLE CONDITION</div>
<div class="a" style="left:27px;top:579.94px;width:41.3px;height:1px;background:#eeede8"></div>
<div class="a" style="left:27px;top:594.55px;width:41.3px;height:1px;background:#404040"></div>
<div class="a" style="left:69.3px;top:594.55px;width:1075.7px;height:1px;background:#d4d4d4"></div>
<div class="t" style="left:30.80px;top:582.00px;font-size:10.9px;font-weight:400;color:#2a2a2a;transform:scaleX(0.9300);transform-origin:0 0;">12293</div>
<div class="cb" style="left:83px;top:580.94px"></div>
<div class="t" style="left:114.00px;top:582.00px;font-size:10.9px;font-weight:400;color:#2a2a2a;transform:scaleX(0.9550);transform-origin:0 0;">RA-00005</div>
<div class="t" style="left:174.50px;top:582.00px;font-size:10.9px;font-weight:400;color:#2a2a2a;transform:scaleX(0.9800);transform-origin:0 0;">WP220729-268</div>
<div class="t" style="left:264.40px;top:582.00px;font-size:10.9px;font-weight:400;color:#2a2a2a;transform:scaleX(0.9450);transform-origin:0 0;">SERVICE CHECK</div>
<div class="a" style="left:27px;top:595.55px;width:41.3px;height:1px;background:#eeede8"></div>
<div class="a" style="left:27px;top:610.16px;width:41.3px;height:1px;background:#404040"></div>
<div class="a" style="left:69.3px;top:610.16px;width:1075.7px;height:1px;background:#d4d4d4"></div>
<div class="t" style="left:30.80px;top:598.00px;font-size:10.9px;font-weight:400;color:#2a2a2a;transform:scaleX(0.9300);transform-origin:0 0;">12292</div>
<div class="cb" style="left:83px;top:596.55px"></div>
<div class="t" style="left:114.00px;top:598.00px;font-size:10.9px;font-weight:400;color:#2a2a2a;transform:scaleX(0.9550);transform-origin:0 0;">RA-00002</div>
<div class="t" style="left:174.50px;top:598.00px;font-size:10.9px;font-weight:400;color:#2a2a2a;transform:scaleX(0.9800);transform-origin:0 0;">WP220728-265</div>
<div class="t" style="left:264.40px;top:598.00px;font-size:10.9px;font-weight:400;color:#2a2a2a;transform:scaleX(0.9450);transform-origin:0 0;">SERVICE AND PROTECTION ON 21 DAY (3 WEEK) CYCLE</div>
<div class="a" style="left:27px;top:611.16px;width:41.3px;height:1px;background:#eeede8"></div>
<div class="a" style="left:27px;top:625.77px;width:41.3px;height:1px;background:#404040"></div>
<div class="a" style="left:69.3px;top:625.77px;width:1075.7px;height:1px;background:#d4d4d4"></div>
<div class="t" style="left:30.80px;top:614.00px;font-size:10.9px;font-weight:400;color:#2a2a2a;transform:scaleX(0.9300);transform-origin:0 0;">12291</div>
<div class="cb" style="left:83px;top:612.16px"></div>
<div class="t" style="left:114.00px;top:614.00px;font-size:10.9px;font-weight:400;color:#2a2a2a;transform:scaleX(0.9550);transform-origin:0 0;">RA-00001</div>
<div class="t" style="left:174.50px;top:614.00px;font-size:10.9px;font-weight:400;color:#2a2a2a;transform:scaleX(0.9800);transform-origin:0 0;">WP220727-264</div>
<div class="t" style="left:264.40px;top:614.00px;font-size:10.9px;font-weight:400;color:#2a2a2a;transform:scaleX(0.9450);transform-origin:0 0;">TRANSIT;LINE CHECK</div>
<div class="a" style="left:27px;top:626.77px;width:41.3px;height:1px;background:#eeede8"></div>
<div class="a" style="left:27px;top:641.38px;width:41.3px;height:1px;background:#404040"></div>
<div class="a" style="left:69.3px;top:641.38px;width:1075.7px;height:1px;background:#d4d4d4"></div>
<div class="t" style="left:30.80px;top:629.00px;font-size:10.9px;font-weight:400;color:#2a2a2a;transform:scaleX(0.9300);transform-origin:0 0;">12117</div>
<div class="cb" style="left:83px;top:627.77px"></div>
<div class="t" style="left:114.00px;top:629.00px;font-size:10.9px;font-weight:400;color:#2a2a2a;transform:scaleX(0.9550);transform-origin:0 0;">RA-00001</div>
<div class="t" style="left:174.50px;top:629.00px;font-size:10.9px;font-weight:400;color:#2a2a2a;transform:scaleX(0.9800);transform-origin:0 0;">WP220700-001</div>
<div class="t" style="left:264.40px;top:629.00px;font-size:10.9px;font-weight:400;color:#2a2a2a;transform:scaleX(0.9450);transform-origin:0 0;">TEST</div>
<div class="a" style="left:1145.8px;top:173px;width:14px;height:460px;background:repeating-conic-gradient(#f2f1ee 0 25%, #dedbd5 0 50%) 0 0/2px 2px"></div>
<div class="a" style="left:1145px;top:173px;width:14.5px;height:14px;background:#d6d3ce;border-top:1px solid #e8e8e8;border-left:1px solid #e8e8e8;border-right:1px solid #404040;border-bottom:1px solid #404040;box-shadow:inset -1px -1px 0 #808080, inset 1px 1px 0 #fff"></div>
<div class="a" style="left:1145px;top:187.5px;width:14.5px;height:13.5px;background:#d6d3ce;border-top:1px solid #e8e8e8;border-left:1px solid #e8e8e8;border-right:1px solid #404040;border-bottom:1px solid #404040;box-shadow:inset -1px -1px 0 #808080, inset 1px 1px 0 #fff"></div>
<div class="a" style="left:1145px;top:611.5px;width:14.5px;height:14.5px;background:#d6d3ce;border-top:1px solid #e8e8e8;border-left:1px solid #e8e8e8;border-right:1px solid #404040;border-bottom:1px solid #404040;box-shadow:inset -1px -1px 0 #808080, inset 1px 1px 0 #fff"></div>
<svg class="a" style="left:1149px;top:178px" width="7" height="4" viewBox="0 0 7 4"><path d="M0,4 H7 L3.5,0 Z" fill="#000"/></svg>
<svg class="a" style="left:1149px;top:617px" width="7" height="4" viewBox="0 0 7 4"><path d="M0,0 H7 L3.5,4 Z" fill="#000"/></svg>
<div class="a" style="left:1160px;top:172px;width:1px;height:455px;background:#f6f5f2"></div>
<div class="a" style="left:0;top:626.6px;width:1177px;height:3px;background:#fdfdfd"></div>
<svg class="a" style="left:0;top:0" width="1177" height="629" viewBox="0 0 1177 629">
<path d="M465.9,68.4 L467.6,68.2 L550.5,155 L522.5,172.5 Z" fill="#0f95f6"/>
<circle cx="541.8" cy="170.5" r="17.6" fill="none" stroke="#fff" stroke-width="1" opacity="0.7"/>
<circle cx="541.8" cy="170.5" r="16.4" fill="#0f95f6" stroke="#1a1a1a" stroke-width="1.3"/>
<circle cx="541.8" cy="170.5" r="15.2" fill="none" stroke="#f0f8ff" stroke-width="0.9"/>
<text x="541.9" y="178.1" text-anchor="middle" style="font-family:'Liberation Serif';font-size:18px" fill="#fff" stroke="#fff" stroke-width="0.25">4</text>
</svg>
</body></html>
